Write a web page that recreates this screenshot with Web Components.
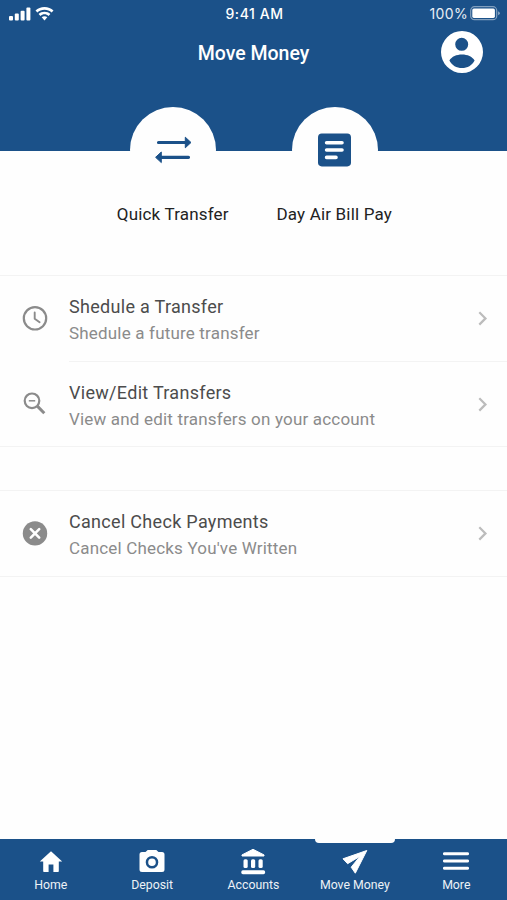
<!DOCTYPE html>
<html lang="en">
<head>
    <meta charset="utf-8">
    <meta name="viewport" content="width=device-width, initial-scale=1">
    <title>Move Money</title>
    <style>
        body {
            margin: 0;
            font-family: Roboto, 'Liberation Sans', sans-serif;
            background: #fefefe;
            --brand: #1b5189;
        }
    </style>
</head>
<body>
    <money-app>
        <status-bar slot="header" time="9:41 AM" battery="100%"></status-bar>
        <title-bar slot="header">Move Money</title-bar>

        <quick-action icon="swap" slot="actions">Quick Transfer</quick-action>
        <quick-action icon="bill" slot="actions">Day Air Bill Pay</quick-action>

        <menu-group>
            <menu-item icon="clock">
                Shedule a Transfer
                <span slot="detail">Shedule a future transfer</span>
            </menu-item>
            <menu-item icon="search">
                View/Edit Transfers
                <span slot="detail">View and edit transfers on your account</span>
            </menu-item>
        </menu-group>
        <menu-group>
            <menu-item icon="cancel">
                Cancel Check Payments
                <span slot="detail">Cancel Checks You've Written</span>
            </menu-item>
        </menu-group>

        <tab-item icon="home" slot="tabs">Home</tab-item>
        <tab-item icon="camera" slot="tabs">Deposit</tab-item>
        <tab-item icon="bank" slot="tabs">Accounts</tab-item>
        <tab-item icon="send" slot="tabs" active>Move Money</tab-item>
        <tab-item icon="more" slot="tabs">More</tab-item>
    </money-app>

    <script>
        // name: [width, height, markup]
        const icons = {
            signal: [22, 14, `
                <rect x="0" y="9" width="4" height="4.500" rx="1"/>
                <rect x="5.800" y="6.600" width="4" height="6.900" rx="1"/>
                <rect x="11.600" y="3.700" width="4" height="9.800" rx="1"/>
                <rect x="17.400" y=".4" width="4" height="13.100" rx="1"/>`],
            wifi: [19, 14, `
                <path d="M9.5 .1C6 .1 2.800 1.400.5 3.600L2.400 5.600C4.300 3.800 6.800 2.800 9.500 2.800S14.700 3.800 16.600 5.600L18.500 3.600C16.200 1.400 13 .1 9.500 .1Z"/>
                <path d="M9.500 4.700C7.200 4.700 5.100 5.600 3.600 7L5.500 8.900C6.600 7.900 8 7.300 9.500 7.300S12.400 7.900 13.500 8.900L15.400 7C13.900 5.600 11.800 4.700 9.500 4.700Z"/>
                <path d="M9.500 9.200C8.400 9.200 7.400 9.600 6.700 10.300L9.500 13.400L12.300 10.300C11.600 9.600 10.600 9.200 9.500 9.200Z"/>`],
            battery: [30, 15, `
                <rect x=".7" y=".7" width="26" height="13" rx="3.800" fill="none" stroke="currentColor" stroke-width="1.200" opacity=".45"/>
                <rect x="2.300" y="2.500" width="22.600" height="9.400" rx="1.600"/>
                <path d="M28 5.200Q30 6 30 7.200T28 9.300Z" opacity=".45"/>`],
            account: [42, 42, `
                <path fill-rule="evenodd" d="M21 0A21 21 0 1 0 21 42A21 21 0 1 0 21 0ZM20.700 6.800A6.500 6.500 0 1 1 20.700 19.800A6.500 6.500 0 1 1 20.700 6.800ZM8.400 29.500C10.800 25.500 15.500 23.500 21 23.500S31.200 25.500 33.600 29.500C31 34.500 26.500 37 21 37S11 34.500 8.400 29.500Z"/>`],
            swap: [38, 28, `
                <g fill="none" stroke="currentColor" stroke-width="3.200" stroke-linecap="round"><path d="M4.500 6.500H31M7 21.300H34.500"/></g>
                <path stroke="currentColor" stroke-linejoin="round" d="M31.300 1.200L37 6.500L31.300 11.800ZM7.300 16L1.600 21.300L7.300 26.600Z"/>`],
            bill: [34, 34, `
                <rect x="0" y=".6" width="33" height="32.800" rx="3.800"/>
                <g fill="none" stroke="#fff" stroke-width="3.600" stroke-linecap="round"><path d="M8.600 9.800H24M8.600 17H24M8.600 24.400H18"/></g>`],
            clock: [26, 26, `
                <g fill="none" stroke="currentColor" stroke-linecap="round" stroke-linejoin="round">
                    <circle cx="13" cy="13.300" r="11.200" stroke-width="2.200"/>
                    <path d="M12.700 7.500V13.800L17.600 17.300" stroke-width="1.900"/>
                </g>`],
            search: [26, 26, `
                <g fill="none" stroke="currentColor">
                    <circle cx="10" cy="9.800" r="7.300" stroke-width="2.200"/>
                    <path d="M6.800 9.800H13.200" stroke-width="1.500"/>
                    <path d="M15.100 14.900L22.300 22.200" stroke-width="3"/>
                </g>`],
            cancel: [26, 26, `
                <circle cx="13" cy="13.400" r="12.200"/>
                <path d="M8.800 9.200L17.200 17.600M17.200 9.200L8.800 17.600" stroke="#fff" stroke-width="2.600" stroke-linecap="round"/>`],
            chevron: [10, 16, `
                <path d="M1.300 2.200L7.500 8.400L1.300 14.600" fill="none" stroke="currentColor" stroke-width="2.200"/>`],
            home: [24, 24, `
                <path d="M12 1.200L.8 11.400H4.200V21.200Q4.200 22 5 22H9.600V14.500H14.400V22H19Q19.800 22 19.800 21.200V11.400H23.200Z"/>`],
            camera: [26, 24, `
                <path fill-rule="evenodd" d="M8.700 0H17.300L19.500 2H23Q25.500 2 25.500 4.500V19.500Q25.500 22 23 22H3Q.5 22 .5 19.500V4.500Q.5 2 3 2H6.500ZM13 6A6.300 6.300 0 1 0 13 18.600A6.300 6.300 0 1 0 13 6ZM13 8.500A3.800 3.800 0 1 1 13 16.100A3.800 3.800 0 1 1 13 8.500Z"/>`],
            bank: [26, 26, `
                <path stroke="currentColor" stroke-linejoin="round" d="M13 .3L24 5.900V7H2V5.900Z"/>
                <rect x="3.500" y="10.200" width="4.200" height="8.800" rx="1.500"/>
                <rect x="11" y="10.200" width="4.200" height="8.800" rx="1.500"/>
                <rect x="18.500" y="10.200" width="4.200" height="8.800" rx="1.500"/>
                <rect x="1.300" y="21.200" width="23.800" height="4" rx="1.600"/>`],
            send: [26, 26, `
                <path stroke="currentColor" stroke-linejoin="round" d="M24.800 1.500L1 9.800L5.600 14.700L18 7.300L9.200 18.200L13.300 24.200Z"/>`],
            more: [26, 20, `
                <path d="M1.400 1.700H24.600M1.400 9H24.600M1.400 16.300H24.600" stroke="currentColor" stroke-width="2.900" stroke-linecap="round"/>`]
        }

        class AppIcon extends HTMLElement {
            constructor() {
                super()
                this.attachShadow({ mode: 'open' })
            }

            connectedCallback() {
                const [width, height, markup] = icons[this.getAttribute('name')]
                this.shadowRoot.innerHTML = /*html*/ `
                <style>
                :host {
                    display: block;
                    flex: none;
                }
                svg {
                    display: block;
                    fill: currentColor;
                }
                </style>
                <svg width="${width}" height="${height}" viewBox="0 0 ${width} ${height}" aria-hidden="true">${markup}</svg>
                `
            }
        }

        class MoneyApp extends HTMLElement {
            constructor() {
                super()
                this.attachShadow({ mode: 'open' })
            }

            connectedCallback() {
                this.shadowRoot.innerHTML = /*html*/ `
                <style>
                :host {
                    display: flex;
                    flex-direction: column;
                    height: 900px;
                }
                header {
                    box-sizing: border-box;
                    height: 151px;
                    background: var(--brand);
                    color: #fff;
                }
                .actions {
                    display: grid;
                    grid-template-columns: 161.5px 161.5px;
                    justify-content: center;
                    margin-top: -44px;
                    padding-left: 1px;
                    height: 168px;
                }
                main {
                    flex: 1;
                    display: flex;
                    flex-direction: column;
                    gap: 43px;
                }
                nav {
                    display: grid;
                    grid-template-columns: repeat(5, 1fr);
                    height: 61px;
                    background: var(--brand);
                    color: #fff;
                }
                </style>
                <header><slot name="header"></slot></header>
                <div class="actions"><slot name="actions"></slot></div>
                <main><slot></slot></main>
                <nav><slot name="tabs"></slot></nav>
                `
            }
        }

        class StatusBar extends HTMLElement {
            constructor() {
                super()
                this.attachShadow({ mode: 'open' })
            }

            connectedCallback() {
                this.shadowRoot.innerHTML = /*html*/ `
                <style>
                :host {
                    display: grid;
                    grid-template-columns: 1fr auto 1fr;
                    align-items: center;
                    box-sizing: border-box;
                    height: 27px;
                    padding: 0 7px 0 9px;
                    font: 14px/20px Inter, Roboto, sans-serif;
                }
                div {
                    display: flex;
                    align-items: center;
                    gap: 4px;
                }
                .time {
                    font-weight: 500;
                    letter-spacing: 0.55px;
                }
                .right {
                    justify-content: flex-end;
                    gap: 2px;
                    letter-spacing: 0.35px;
                    color: #e8eef4;
                }
                .right app-icon {
                    color: #fff;
                }
                </style>
                <div><app-icon name="signal"></app-icon><app-icon name="wifi"></app-icon></div>
                <span class="time">${this.getAttribute('time')}</span>
                <div class="right"><span>${this.getAttribute('battery')}</span><app-icon name="battery"></app-icon></div>
                `
            }
        }

        class TitleBar extends HTMLElement {
            constructor() {
                super()
                this.attachShadow({ mode: 'open' })
            }

            connectedCallback() {
                this.shadowRoot.innerHTML = /*html*/ `
                <style>
                :host {
                    display: grid;
                    grid-template-columns: 1fr auto 1fr;
                    align-items: center;
                    height: 50px;
                    padding: 0 24px;
                }
                h1 {
                    grid-column: 2;
                    margin: 0;
                    padding-top: 4px;
                    font-size: 19.5px;
                    line-height: 26px;
                    font-weight: 500;
                }
                app-icon {
                    justify-self: end;
                }
                </style>
                <h1><slot></slot></h1>
                <app-icon name="account"></app-icon>
                `
            }
        }

        class QuickAction extends HTMLElement {
            constructor() {
                super()
                this.attachShadow({ mode: 'open' })
            }

            connectedCallback() {
                this.shadowRoot.innerHTML = /*html*/ `
                <style>
                :host {
                    display: flex;
                    flex-direction: column;
                    align-items: center;
                    gap: 8px;
                    font-size: 17px;
                    line-height: 26px;
                    color: #222;
                    letter-spacing: 0.18px;
                }
                .circle {
                    display: grid;
                    place-items: center;
                    width: 86px;
                    height: 86px;
                    border-radius: 50%;
                    background: #fefefe;
                    color: var(--brand);
                }
                span {
                    padding-right: 1px;
                }
                </style>
                <div class="circle"><app-icon name="${this.getAttribute('icon')}"></app-icon></div>
                <span><slot></slot></span>
                `
            }
        }

        class MenuGroup extends HTMLElement {
            constructor() {
                super()
                this.attachShadow({ mode: 'open' })
            }

            connectedCallback() {
                this.shadowRoot.innerHTML = /*html*/ `
                <style>
                :host {
                    display: block;
                    border: solid #f3f3f3;
                    border-width: 1px 0;
                }
                ::slotted(menu-item:not(:last-child)) {
                    --divider: #f3f3f3;
                    height: 86px;
                }
                ::slotted(menu-item:not(:first-child)) {
                    height: 84px;
                }
                </style>
                <slot></slot>
                `
            }
        }

        class MenuItem extends HTMLElement {
            constructor() {
                super()
                this.attachShadow({ mode: 'open' })
            }

            connectedCallback() {
                this.shadowRoot.innerHTML = /*html*/ `
                <style>
                :host {
                    display: flex;
                    height: 85px;
                    padding-left: 22px;
                    color: #8b8b8b;
                }
                .icon {
                    width: 47px;
                    padding-top: 29px;
                }
                .body {
                    flex: 1;
                    display: flex;
                    justify-content: space-between;
                    box-sizing: border-box;
                    padding: 18px 19px 0 0;
                    border-bottom: 1px solid var(--divider, transparent);
                }
                .title,
                .detail {
                    line-height: 26px;
                    white-space: nowrap;
                }
                .title {
                    font-size: 18px;
                    color: #4c4c4c;
                    letter-spacing: 0.3px;
                }
                .detail {
                    font-size: 17px;
                    letter-spacing: 0.18px;
                }
                .chevron {
                    padding-top: 16px;
                    color: #bcbcbc;
                }
                </style>
                <div class="icon"><app-icon name="${this.getAttribute('icon')}"></app-icon></div>
                <div class="body">
                    <div>
                        <div class="title"><slot></slot></div>
                        <div class="detail"><slot name="detail"></slot></div>
                    </div>
                    <app-icon class="chevron" name="chevron"></app-icon>
                </div>
                `
            }
        }

        class TabItem extends HTMLElement {
            constructor() {
                super()
                this.attachShadow({ mode: 'open' })
            }

            connectedCallback() {
                this.shadowRoot.innerHTML = /*html*/ `
                <style>
                :host {
                    display: flex;
                    flex-direction: column;
                    align-items: center;
                    position: relative;
                    padding-top: 9px;
                    font-size: 12.3px;
                    line-height: 16px;
                }
                :host([active])::before {
                    content: '';
                    position: absolute;
                    top: -1px;
                    left: calc(50% - 40px);
                    width: 80px;
                    height: 5px;
                    border-radius: 0 0 4px 4px;
                    background: #fefefe;
                }
                .icon {
                    display: grid;
                    place-items: center;
                    height: 27px;
                    margin-bottom: 2px;
                }
                span {
                    color: #edf2f7;
                }
                </style>
                <div class="icon"><app-icon name="${this.getAttribute('icon')}"></app-icon></div>
                <span><slot></slot></span>
                `
            }
        }

        customElements.define('app-icon', AppIcon)
        customElements.define('money-app', MoneyApp)
        customElements.define('status-bar', StatusBar)
        customElements.define('title-bar', TitleBar)
        customElements.define('quick-action', QuickAction)
        customElements.define('menu-group', MenuGroup)
        customElements.define('menu-item', MenuItem)
        customElements.define('tab-item', TabItem)
    </script>
</body>
</html>
